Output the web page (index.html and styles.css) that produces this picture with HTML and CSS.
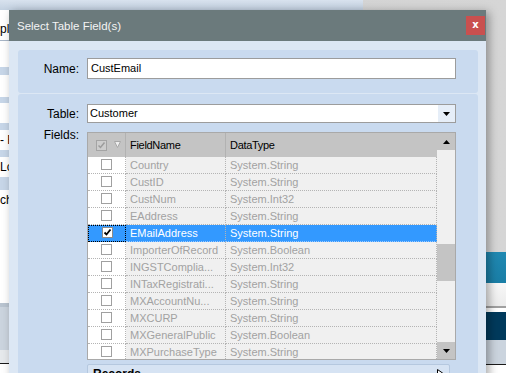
FILE: index.html
```html
<!DOCTYPE html>
<html lang="en">
<head>
  <meta charset="UTF-8" />
  <title>Select Table Field(s)</title>
  <link rel="stylesheet" href="styles.css">
</head>
<body>
  <div class="desk">
    <div class="top-strip"></div>

    <!-- window behind, left edge -->
    <div class="left-win">
      <div class="lw white h30"><span class="lw-text t-pl">pl</span></div>
      <div class="lw line"></div>
      <div class="lw white h26"></div>
      <div class="lw blue h8"></div>
      <div class="lw white h22"></div>
      <div class="lw blue h6"></div>
      <div class="lw white h20"></div>
      <div class="lw blue h7"></div>
      <div class="lw white h20"><span class="lw-text">- F</span></div>
      <div class="lw blue h7"></div>
      <div class="lw white h20"><span class="lw-text">Lo</span></div>
      <div class="lw blue h13"></div>
      <div class="lw white h113"><span class="lw-text">ch</span></div>
      <div class="lw grey h4"></div>
      <div class="lw pale h43"></div>
      <div class="lw light h13"></div>
      <div class="lw black h1"></div>
      <div class="lw white h9"></div>
    </div>

    <!-- window behind, right edge -->
    <div class="right-win">
      <div class="rw teal h31"></div>
      <div class="rw soft h23"></div>
      <div class="rw rule h2"></div>
      <div class="rw white h4"></div>
      <div class="rw navy h28"></div>
      <div class="rw pale h24"></div>
      <div class="rw black h1"></div>
      <div class="rw white h9"></div>
    </div>

    <div class="dialog">
      <div class="titlebar">
        <span class="title">Select Table Field(s)</span>
        <button class="close">x</button>
      </div>

      <div class="dialog-body">
        <div class="panel panel-name">
          <div class="form-row">
            <label class="label">Name:</label>
            <div class="input">CustEmail</div>
          </div>
        </div>

        <div class="panel panel-table">
          <div class="form-row">
            <label class="label">Table:</label>
            <div class="select">
              <span class="select-text">Customer</span>
              <span class="select-btn">
                <svg width="7" height="4" viewBox="0 0 7 4"><path d="M0 0h7L3.5 4z" fill="#000"/></svg>
              </span>
            </div>
          </div>

          <div class="form-row fields-row">
            <label class="label label-top">Fields:</label>
            <div class="grid">
              <div class="grid-main">
                <div class="grid-head">
                  <div class="hc hc-check">
                    <span class="cb cb-head">
                      <svg width="9" height="9" viewBox="0 0 9 9"><path d="M1.5 4.5l2 2 4-5" fill="none" stroke="#9c9c9c" stroke-width="1.5"/></svg>
                    </span>
                    <svg class="funnel" width="7" height="7" viewBox="0 0 7 7"><path d="M0.5 0.5h6L3.5 6.5z" fill="#eeeeee" stroke="#a8a8a8"/></svg>
                  </div>
                  <div class="hc">FieldName</div>
                  <div class="hc hc-last">DataType</div>
                </div>
                <div id="rows"></div>
              </div>
              <div class="vscroll">
                <div class="sb-btn">
                  <svg width="7" height="4" viewBox="0 0 7 4"><path d="M0 4h7L3.5 0z" fill="#000"/></svg>
                </div>
                <div class="sb-track"><div class="sb-thumb"></div></div>
                <div class="sb-btn">
                  <svg width="7" height="4" viewBox="0 0 7 4"><path d="M0 0h7L3.5 4z" fill="#000"/></svg>
                </div>
              </div>
            </div>
          </div>

          <div class="records">
            <span>Records</span>
            <svg class="records-arrow" width="6" height="8" viewBox="0 0 6 8"><path d="M0.5 0.5v7l5-3.5z" fill="#fff" stroke="#000"/></svg>
          </div>
        </div>
      </div>
    </div>
  </div>

  <script>
    const fields = [
      { name: "Country", type: "System.String" },
      { name: "CustID", type: "System.String" },
      { name: "CustNum", type: "System.Int32" },
      { name: "EAddress", type: "System.String" },
      { name: "EMailAddress", type: "System.String", checked: true },
      { name: "ImporterOfRecord", type: "System.Boolean" },
      { name: "INGSTComplia...", type: "System.Int32" },
      { name: "INTaxRegistrati...", type: "System.String" },
      { name: "MXAccountNu...", type: "System.String" },
      { name: "MXCURP", type: "System.String" },
      { name: "MXGeneralPublic", type: "System.Boolean" },
      { name: "MXPurchaseType", type: "System.String" }
    ];

    const rowsEl = document.getElementById("rows");
    const tick = '<svg width="9" height="9" viewBox="0 0 9 9"><path d="M1.5 4.5l2 2 4-5" fill="none" stroke="#000" stroke-width="1.8"/></svg>';

    fields.forEach((f) => {
      const row = document.createElement("div");
      row.className = "grid-row" + (f.checked ? " sel" : "");
      row.innerHTML =
        `<div class="cell cc"><span class="cb">${f.checked ? tick : ""}</span></div>` +
        `<div class="cell">${f.name}</div>` +
        `<div class="cell">${f.type}</div>`;
      rowsEl.appendChild(row);
    });
  </script>
</body>
</html>
```

FILE: styles.css
```css
* {
  box-sizing: border-box;
}

body {
  margin: 0;
  font-family: "Liberation Sans", Arial, sans-serif;
  font-size: 11px;
  background: #d3d3d3;
}

.desk {
  position: relative;
  width: 506px;
  height: 373px;
  overflow: hidden;
  background: linear-gradient(90deg, #d0d0d0, #d6d6d6);
}

.top-strip {
  width: 363px;
  height: 10px;
  background: linear-gradient(#d8e2ee, #c3d1e1);
}

/* background windows */
.left-win {
  position: absolute;
  left: 0;
  top: 10px;
  width: 9px;
  display: flex;
  flex-direction: column;
  overflow: hidden;
}

.lw-text {
  display: block;
  font-size: 12px;
  line-height: 14px;
  white-space: nowrap;
  color: #000;
  padding-top: 3px;
}

.t-pl {
  padding-top: 12px;
}

.right-win {
  position: absolute;
  left: 486px;
  top: 252px;
  width: 20px;
  display: flex;
  flex-direction: column;
}

.white { background: #fff; }
.blue { background: #c7d6e8; }
.line { height: 1px; background: #a7b5c6; }
.grey { background: #b9c4d0; }
.pale { background: #cbd4de; }
.light { background: #e6e9ec; }
.black { background: #1a1a1a; }
.teal { background: linear-gradient(#2089b2, #1a7ea6); }
.soft { background: linear-gradient(#f7f7f7, #ececec); }
.rule { background: #a0a0a0; }
.navy { background: #003a5c; }

.h1 { height: 1px; }
.h2 { height: 2px; }
.h4 { height: 4px; }
.h6 { height: 6px; }
.h7 { height: 7px; }
.h8 { height: 8px; }
.h9 { height: 9px; }
.h13 { height: 13px; }
.h20 { height: 20px; }
.h22 { height: 22px; }
.h23 { height: 23px; }
.h24 { height: 24px; }
.h26 { height: 26px; }
.h28 { height: 28px; }
.h30 { height: 30px; }
.h31 { height: 31px; }
.h43 { height: 43px; }
.h113 { height: 113px; }

/* dialog */
.dialog {
  position: absolute;
  left: 9px;
  top: 10px;
  width: 477px;
  height: 380px;
  background: #dce7f4;
  box-shadow: 3px 2px 9px rgba(0, 0, 0, 0.35);
}

.titlebar {
  height: 31px;
  background: #6b7a7c;
  display: flex;
  align-items: center;
  padding: 0 1px 0 8px;
}

.title {
  color: #f4f4f4;
  font-size: 11.5px;
}

.close {
  margin-left: auto;
  width: 19px;
  height: 19px;
  border: none;
  padding: 0 0 2px;
  background: #c9504f;
  color: #fff;
  font-family: "DejaVu Sans", sans-serif;
  font-weight: bold;
  font-size: 10px;
  line-height: 17px;
}

.dialog-body {
  padding: 9px 8px 0 9px;
}

.panel {
  background: #c9daef;
  border-radius: 3px;
}

.panel-name {
  height: 43px;
  padding-top: 8px;
  margin-bottom: 1px;
}

.panel-table {
  padding-top: 10px;
  height: 300px;
}

.form-row {
  display: flex;
  align-items: center;
}

.label {
  width: 61px;
  margin-right: 8px;
  text-align: right;
  font-size: 12px;
  color: #000;
}

.label-top {
  align-self: flex-start;
  line-height: 14px;
  margin-top: -4px;
}

.input {
  width: 369px;
  height: 21px;
  background: #fff;
  border: 1px solid #9c9c9c;
  padding: 0 3px;
  line-height: 19px;
  font-size: 11px;
}

.select {
  width: 369px;
  height: 19px;
  background: #fff;
  border: 1px solid #9c9c9c;
  display: flex;
}

.select-text {
  flex: 1;
  padding-left: 2px;
  line-height: 17px;
  font-size: 11px;
}

.select-btn {
  width: 17px;
  background: #e6eef8;
  display: flex;
  align-items: center;
  justify-content: center;
  padding-top: 1px;
}

/* fields grid */
.fields-row {
  margin-top: 9px;
  align-items: flex-start;
}

.grid {
  width: 369px;
  height: 228px;
  border: 1px solid #a9a9a9;
  display: flex;
  overflow: hidden;
}

.grid-main {
  width: 349px;
}

.grid-head {
  display: grid;
  grid-template-columns: 38px 100px 211px;
  height: 24px;
  background: #c4c4c4;
}

.hc {
  border-right: 1px solid #b2b2b2;
  padding-left: 4px;
  line-height: 24px;
  font-size: 11px;
  letter-spacing: -0.3px;
  color: #000;
}

.hc-last {
  border-right: none;
}

.hc-check {
  display: flex;
  align-items: center;
  padding-left: 8px;
}

.funnel {
  margin-left: 7px;
  margin-top: -1px;
}

.grid-row {
  display: grid;
  grid-template-columns: 38px 100px 211px;
  height: 17px;
}

.cell {
  height: 17px;
  background: #f0f0f0;
  border-right: 1px dotted #b4b4b4;
  border-bottom: 1px dotted #b4b4b4;
  padding-left: 4px;
  line-height: 16px;
  color: #a2a2a2;
  white-space: nowrap;
  overflow: hidden;
}

.cc {
  background: #fff;
  padding: 2px 0 0;
}

.cb {
  display: flex;
  align-items: center;
  justify-content: center;
  width: 11px;
  height: 11px;
  margin: 0 auto;
  border: 1px solid #a0a0a0;
  background: #fff;
}

.cb-head {
  margin: 0;
  background: #cdcdcd;
  border-color: #a4a4a4;
}

.grid-row.sel .cell {
  background: #3399ff;
  color: #fff;
  border-bottom-color: #9ccaff;
}

.grid-row.sel .cc {
  border: 1px dotted #000;
  padding-top: 1px;
}

.grid-row.sel .cb {
  border-color: #8a8a8a;
}

.vscroll {
  width: 18px;
  display: flex;
  flex-direction: column;
  background: #f0f0f0;
}

.sb-btn {
  height: 17px;
  background: #c4c4c4;
  display: flex;
  align-items: center;
  justify-content: center;
}

.sb-track {
  flex: 1;
}

.sb-thumb {
  margin-top: 94px;
  height: 37px;
  background: #c4c4c4;
}

.records {
  margin: 4px 0 0 69px;
  width: 363px;
  height: 20px;
  background: #d6e3f3;
  border: 1px solid #b5c8df;
  border-radius: 2px;
  padding: 2px 0 0 5px;
  font-size: 12px;
  font-weight: bold;
  display: flex;
  align-items: flex-start;
}

.records-arrow {
  margin-left: auto;
  margin-right: 6px;
  margin-top: 2px;
}
```
